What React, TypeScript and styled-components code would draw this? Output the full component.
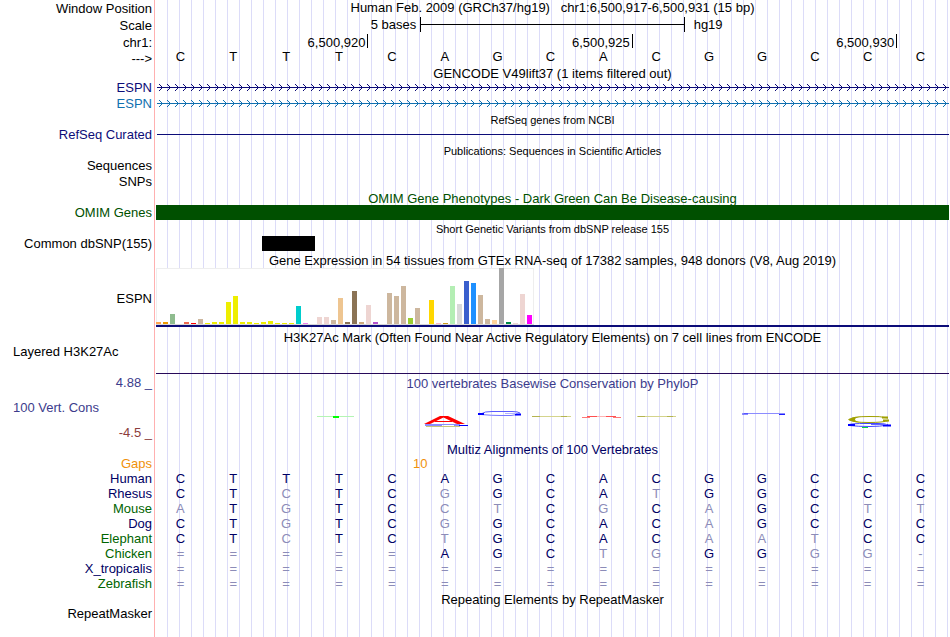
import React from "react";
import styled, { createGlobalStyle } from "styled-components";

const NAVY = "#0c0c78";
const ALIGN_NAVY = "#000064";
const GREEN = "#006400";
const DARK_GREEN = "#005000";
const CONS_BLUE = "#3c3c8c";
const CONS_RED = "#8c3c3c";
const ORANGE = "#f0910a";

const GlobalStyle = createGlobalStyle`
  body {
    margin: 0;
    background: #fff;
    font-family: "Liberation Sans", Arial, sans-serif;
    font-size: 13px;
    line-height: 15px;
    color: #000;
  }
`;

const Browser = styled.main`
  min-height: 100vh;
  overflow: hidden;
  background-image:
    linear-gradient(#fff, #fff),
    linear-gradient(#ffb0b0, #ffb0b0),
    repeating-linear-gradient(90deg, #dcdcf8 0 1px, transparent 1px 12px);
  background-size: 154px 100%, 1px 100%, calc(100% - 167px) 100%;
  background-position: 0 0, 154px 0, 167px 0;
  background-repeat: no-repeat;
`;

const Row = styled.div<{ $h: number }>`
  display: grid;
  grid-template-columns: 155px minmax(0, 1fr);
  height: ${(p) => p.$h}px;
`;

const Label = styled.div<{ $color?: string; $pad?: number; $left?: boolean }>`
  color: ${(p) => p.$color || "#000"};
  padding: ${(p) => p.$pad || 0}px 3px 0 13px;
  text-align: ${(p) => (p.$left ? "left" : "right")};
  white-space: nowrap;
`;

const LabelStack = styled.div`
  display: grid;
  grid-auto-rows: 25px;
  padding-top: 1px;
`;

const Track = styled.div<{ $pad?: number }>`
  padding: ${(p) => p.$pad || 0}px 1px 0 1px;
  min-width: 0;
`;

const Title = styled.h2<{ $color?: string; $small?: boolean }>`
  margin: 0;
  font-weight: normal;
  font-size: ${(p) => (p.$small ? 11 : 13)}px;
  color: ${(p) => p.$color || "#000"};
  text-align: center;
  white-space: pre;
`;

const ScaleGrid = styled.div`
  display: grid;
  grid-template-columns: 1fr 1fr 1fr;
`;

const ScaleText = styled.span<{ $end?: boolean }>`
  text-align: ${(p) => (p.$end ? "right" : "left")};
  padding: 0 ${(p) => (p.$end ? 4 : 9)}px;
`;

const ScaleBar = styled.div`
  height: 15px;
  border: solid #000;
  border-width: 0 1px;
  background: linear-gradient(#000, #000) 0 7px / 100% 1px no-repeat;
`;

const Ruler = styled.div`
  display: grid;
  grid-template-columns: 4fr 5fr 5fr 1fr;
  margin: 0 -1px 0 1px;
`;

const RulerMark = styled.span`
  height: 14px;
  padding: 1px 2px 0 0;
  box-sizing: border-box;
  border-right: 1px solid #000;
  text-align: right;
`;

const Bases = styled.div`
  display: grid;
  grid-template-columns: repeat(15, 1fr);
  margin-left: -1px;
  padding-right: 3px;
  text-align: center;
`;

const Line = styled.div<{ $color: string }>`
  height: 1px;
  margin: 7px 0 0 1px;
  background: ${(p) => p.$color};
`;

const Arrows = styled.svg`
  display: block;
  width: 100%;
  height: 16px;
`;

const GeneBar = styled.div`
  height: 15px;
  background: ${DARK_GREEN};
`;

const SnpBar = styled.div`
  height: 15px;
  margin-left: 13.333%;
  width: 6.667%;
  background: #000;
`;

const Expression = styled.div`
  border-bottom: 2px solid ${NAVY};
  height: 57px;
`;

const Chart = styled.svg`
  display: block;
`;

const SignalRow = styled(Row)`
  background: linear-gradient(#280a5a, #280a5a) 156px 100% / calc(100% - 157px) 1px no-repeat;
`;

const Conservation = styled.svg`
  display: block;
  width: 100%;
  height: 24px;
  margin-top: 17px;
`;

const AlignmentWrap = styled.div`
  padding-right: 3px;
`;

const AlignmentTable = styled.table`
  width: 100%;
  table-layout: fixed;
  border-collapse: collapse;
`;

const NameColumn = styled.col`
  width: 154px;
`;

const Species = styled.th<{ $color: string }>`
  padding: 0 2px 0 0;
  height: 15px;
  font-weight: normal;
  text-align: right;
  color: ${(p) => p.$color};
`;

const Base = styled.td<{ $dim?: boolean }>`
  padding: 0;
  text-align: center;
  color: ${(p) => (p.$dim ? "#8c8cb8" : ALIGN_NAVY)};
`;

const Gap = styled(Base)`
  padding-left: 4px;
  color: ${ORANGE};
`;

const REFERENCE = "CTTTCAGCACGGCCC";

const SPECIES: [string, string, string][] = [
  ["Human", ALIGN_NAVY, "CTTTCAGCACGGCCC"],
  ["Rhesus", ALIGN_NAVY, "CTCTCGGCATGGCCC"],
  ["Mouse", GREEN, "ATGTCCTCGCAGCTT"],
  ["Dog", ALIGN_NAVY, "CTGTCGGCACAGCCC"],
  ["Elephant", GREEN, "CTCTCTGCACAATCC"],
  ["Chicken", GREEN, "=====AGCTGGGGG-"],
  ["X_tropicalis", ALIGN_NAVY, "==============="],
  ["Zebrafish", GREEN, "==============="],
];

const TISSUES: [number, string][] = [
  [2, "#ffa54f"], [2, "#ee9a00"], [10, "#8fbc8f"], [0, "#8b1c62"], [2, "#ee6a50"], [1, "#ff0000"],
  [5, "#cdb79e"], [1, "#eeee00"], [2, "#eeee00"], [2, "#eeee00"], [22, "#eeee00"], [28, "#eeee00"],
  [2, "#eeee00"], [2, "#eeee00"], [1, "#eeee00"], [2, "#eeee00"], [3, "#eeee00"], [1, "#eeee00"],
  [1, "#eeee00"], [1, "#eeee00"], [18, "#00cdcd"], [1, "#ee82ee"], [0, "#9ac0cd"], [7, "#eed5d2"],
  [7, "#eed5d2"], [4, "#cdb79e"], [26, "#eec591"], [2, "#8b7355"], [33, "#8b7355"], [2, "#cdaa7d"],
  [19, "#eed5d2"], [2, "#b452cd"], [0, "#7a378b"], [31, "#cdb79e"], [28, "#cdb79e"], [38, "#cdb79e"],
  [6, "#9acd32"], [16, "#cdb79e"], [0, "#7a67ee"], [24, "#ffd700"], [1, "#ffb6c1"], [1, "#cd9b1d"],
  [38, "#b4eeb4"], [20, "#d9d9d9"], [43, "#3a5fcd"], [41, "#1e90ff"], [29, "#cdb79e"], [5, "#cdb79e"],
  [4, "#ffd39b"], [56, "#a6a6a6"], [2, "#008b45"], [1, "#eed5d2"], [30, "#eed5d2"], [9, "#ff00ff"],
];

function TitleRow({ children, h = 15, pad, color, small }: {
  children: React.ReactNode; h?: number; pad?: number; color?: string; small?: boolean;
}) {
  return (
    <Row $h={h}>
      <span />
      <Track $pad={pad}>
        <Title $color={color} $small={small}>{children}</Title>
      </Track>
    </Row>
  );
}

function GeneTrack({ id, color }: { id: string; color: string }) {
  return (
    <Row $h={16}>
      <Label $color={color}>ESPN</Label>
      <Track>
        <Arrows aria-hidden="true" shapeRendering="crispEdges">
          <defs>
            <pattern id={id} x="1" width="8" height="16" patternUnits="userSpaceOnUse">
              <path
                d="M2 4h1v1h-1zM3 5h1v1h-1zM4 6h1v1h-1zM5 7h1v1h-1zM4 8h1v1h-1zM3 9h1v1h-1zM2 10h1v1h-1z"
                fill={color}
              />
              <path d="M0 7h8v1h-8z" fill={color} />
            </pattern>
          </defs>
          <rect x="1" width="100%" height="16" fill={`url(#${id})`} />
        </Arrows>
      </Track>
    </Row>
  );
}

function ExpressionChart() {
  return (
    <Chart width="378" height="57" shapeRendering="crispEdges" role="img" aria-label="Expression by tissue">
      <rect x="0" y="0" width="378" height="57" fill="#eeeeee" />
      <rect x="1" y="1" width="376" height="55" fill="#ffffff" />
      <rect x="0" y="56" width="378" height="1" fill="#d8d8d8" />
      {TISSUES.map(([h, color], i) => (
        <rect key={i} x={i * 7} y={56 - h} width="5" height={h} fill={color} />
      ))}
    </Chart>
  );
}

function ConservationChart() {
  return (
    <Conservation viewBox="0 0 793 24" preserveAspectRatio="none" fill="none" role="img" aria-label="Conservation scores">
      <path d="M161 8.5h37" stroke="#b4f5b4" />
      <path d="M177 9h6" stroke="#00ff00" strokeWidth="2" />

      <path d="M270 18.5h34" stroke="#c8c87a" />
      <path d="M269 16.5h35M269 17.5h17M298 17.5h6" stroke="#8c8cff" />
      <path d="M303 17.5h9" stroke="#0000ff" />
      <path d="M268 16L274 16L287.5 9.500L301 16L309 16L292 8L284 8Z" fill="#ff0000" />
      <path d="M279 13.500h17" stroke="#ff0000" />

      <path d="M326 5.500Q328 3.500 336 3.500H356Q362 3.500 364 5" stroke="#5a5aff" />
      <path d="M325 6.500Q336 7.500 344 7.500H355Q360 6.500 363 6.500" stroke="#7878ff" />
      <path d="M322 6h6M359 6.500h6" stroke="#0000ff" strokeWidth="2" />
      <path d="M349 5.500h11" stroke="#b4b4ff" />

      <path d="M376 8.500h39" stroke="#d4d48c" />
      <path d="M376 8.500h8M405 8.500h6" stroke="#b4b450" />
      <path d="M426 9.500h8M457 9.500h8" stroke="#ff7878" />
      <path d="M431 8.500h10M450 8.500h10" stroke="#ff5050" />
      <path d="M441 8.500h9" stroke="#ffb4b4" />
      <path d="M481 8.500h39" stroke="#d4d48c" />
      <path d="M482 8.500h7M511 8.500h6" stroke="#b4b450" />

      <path d="M588 5.500h41" stroke="#8c8cff" />
      <path d="M586 6h6M623 6.500h6" stroke="#1e1eff" />

      <path d="M732 10Q724 8 713 8.500Q695 8.500 695 11.500Q695 14.500 713 14.500Q727 14.500 733 12.500" stroke="#a0a000" strokeWidth="1" />
      <path d="M692 11.500Q694 9 706 8.500Q699 9.500 699 11.500Q699 13.500 706 14.500Q694 14 692 11.500Z" fill="#a0a000" />
      <path d="M726 9.500h6M727 12.500h6" stroke="#a0a000" strokeWidth="2" />
      <path d="M693 16.500Q697 15.500 709 15.500H722Q730 15.500 732 17M693 17.500Q702 18.500 714 18.500Q724 18.500 732 17" stroke="#4646ff" />
      <path d="M692 17h7M727 17.500h8" stroke="#0000ff" strokeWidth="2" />
      <path d="M715 16.500h16" stroke="#6464ff" />
      <path d="M706 19.500h6" stroke="#00dc3c" />
    </Conservation>
  );
}

function Alignments() {
  return (
    <AlignmentWrap>
      <AlignmentTable aria-label="Multiz alignments">
        <colgroup>
          <NameColumn />
          <col span={15} />
        </colgroup>
        <tbody>
          <tr>
            <Species scope="row" $color={ORANGE}>Gaps</Species>
            <Base colSpan={4} />
            <Gap colSpan={2}>10</Gap>
            <Base colSpan={9} />
          </tr>
          {SPECIES.map(([name, color, bases]) => (
            <tr key={name}>
              <Species scope="row" $color={color}>{name}</Species>
              {bases.split("").map((b, i) => (
                <Base key={i} $dim={b !== REFERENCE[i]}>{b}</Base>
              ))}
            </tr>
          ))}
        </tbody>
      </AlignmentTable>
    </AlignmentWrap>
  );
}

export default function App() {
  return (
    <>
      <GlobalStyle />
      <Browser>
        <Row $h={17}>
          <Label $pad={1}>Window Position</Label>
          <Track>
            <Title as="h1">{"Human Feb. 2009 (GRCh37/hg19)   chr1:6,500,917-6,500,931 (15 bp)"}</Title>
          </Track>
        </Row>
        <Row $h={17}>
          <Label $pad={1}>Scale</Label>
          <Track>
            <ScaleGrid>
              <ScaleText $end>5 bases</ScaleText>
              <ScaleBar />
              <ScaleText>hg19</ScaleText>
            </ScaleGrid>
          </Track>
        </Row>
        <Row $h={15}>
          <Label $pad={1}>chr1:</Label>
          <Track>
            <Ruler>
              <RulerMark>6,500,920</RulerMark>
              <RulerMark>6,500,925</RulerMark>
              <RulerMark>6,500,930</RulerMark>
            </Ruler>
          </Track>
        </Row>
        <Row $h={17}>
          <Label $pad={2}>---&gt;</Label>
          <Bases>
            {REFERENCE.split("").map((b, i) => (
              <span key={i}>{b}</span>
            ))}
          </Bases>
        </Row>

        <TitleRow h={14}>GENCODE V49lift37 (1 items filtered out)</TitleRow>
        <GeneTrack id="arrows-coding" color={NAVY} />
        <GeneTrack id="arrows-alternate" color="#1070b0" />

        <TitleRow small pad={1}>RefSeq genes from NCBI</TitleRow>
        <Row $h={16}>
          <Label $color={NAVY}>RefSeq Curated</Label>
          <Track>
            <Line $color={NAVY} />
          </Track>
        </Row>

        <TitleRow small pad={1}>Publications: Sequences in Scientific Articles</TitleRow>
        <Row $h={16}>
          <Label>Sequences</Label>
        </Row>
        <Row $h={16}>
          <Label>SNPs</Label>
        </Row>

        <TitleRow pad={1} color={DARK_GREEN}>OMIM Gene Phenotypes - Dark Green Can Be Disease-causing</TitleRow>
        <Row $h={15}>
          <Label $color={DARK_GREEN}>OMIM Genes</Label>
          <Track>
            <GeneBar />
          </Track>
        </Row>

        <TitleRow h={16} small pad={2}>Short Genetic Variants from dbSNP release 155</TitleRow>
        <Row $h={16}>
          <Label>Common dbSNP(155)</Label>
          <Track>
            <SnpBar />
          </Track>
        </Row>

        <TitleRow h={16} pad={1}>Gene Expression in 54 tissues from GTEx RNA-seq of 17382 samples, 948 donors (V8, Aug 2019)</TitleRow>
        <Row $h={62}>
          <Label $pad={23}>ESPN</Label>
          <Track>
            <Expression>
              <ExpressionChart />
            </Expression>
          </Track>
        </Row>

        <SignalRow $h={44}>
          <Label $left $pad={14}>Layered H3K27Ac</Label>
          <Track>
            <Title>H3K27Ac Mark (Often Found Near Active Regulatory Elements) on 7 cell lines from ENCODE</Title>
          </Track>
        </SignalRow>

        <Row $h={67}>
          <LabelStack>
            <Label $color={CONS_BLUE}>4.88 _</Label>
            <Label $left $color={CONS_BLUE}>100 Vert. Cons</Label>
            <Label $color={CONS_RED}>-4.5 _</Label>
          </LabelStack>
          <Track $pad={2}>
            <Title $color={CONS_BLUE}>100 vertebrates Basewise Conservation by PhyloP</Title>
            <ConservationChart />
          </Track>
        </Row>

        <TitleRow pad={1} color={ALIGN_NAVY}>Multiz Alignments of 100 Vertebrates</TitleRow>
        <Alignments />

        <TitleRow pad={1}>Repeating Elements by RepeatMasker</TitleRow>
        <Row $h={16}>
          <Label>RepeatMasker</Label>
        </Row>
      </Browser>
    </>
  );
}
